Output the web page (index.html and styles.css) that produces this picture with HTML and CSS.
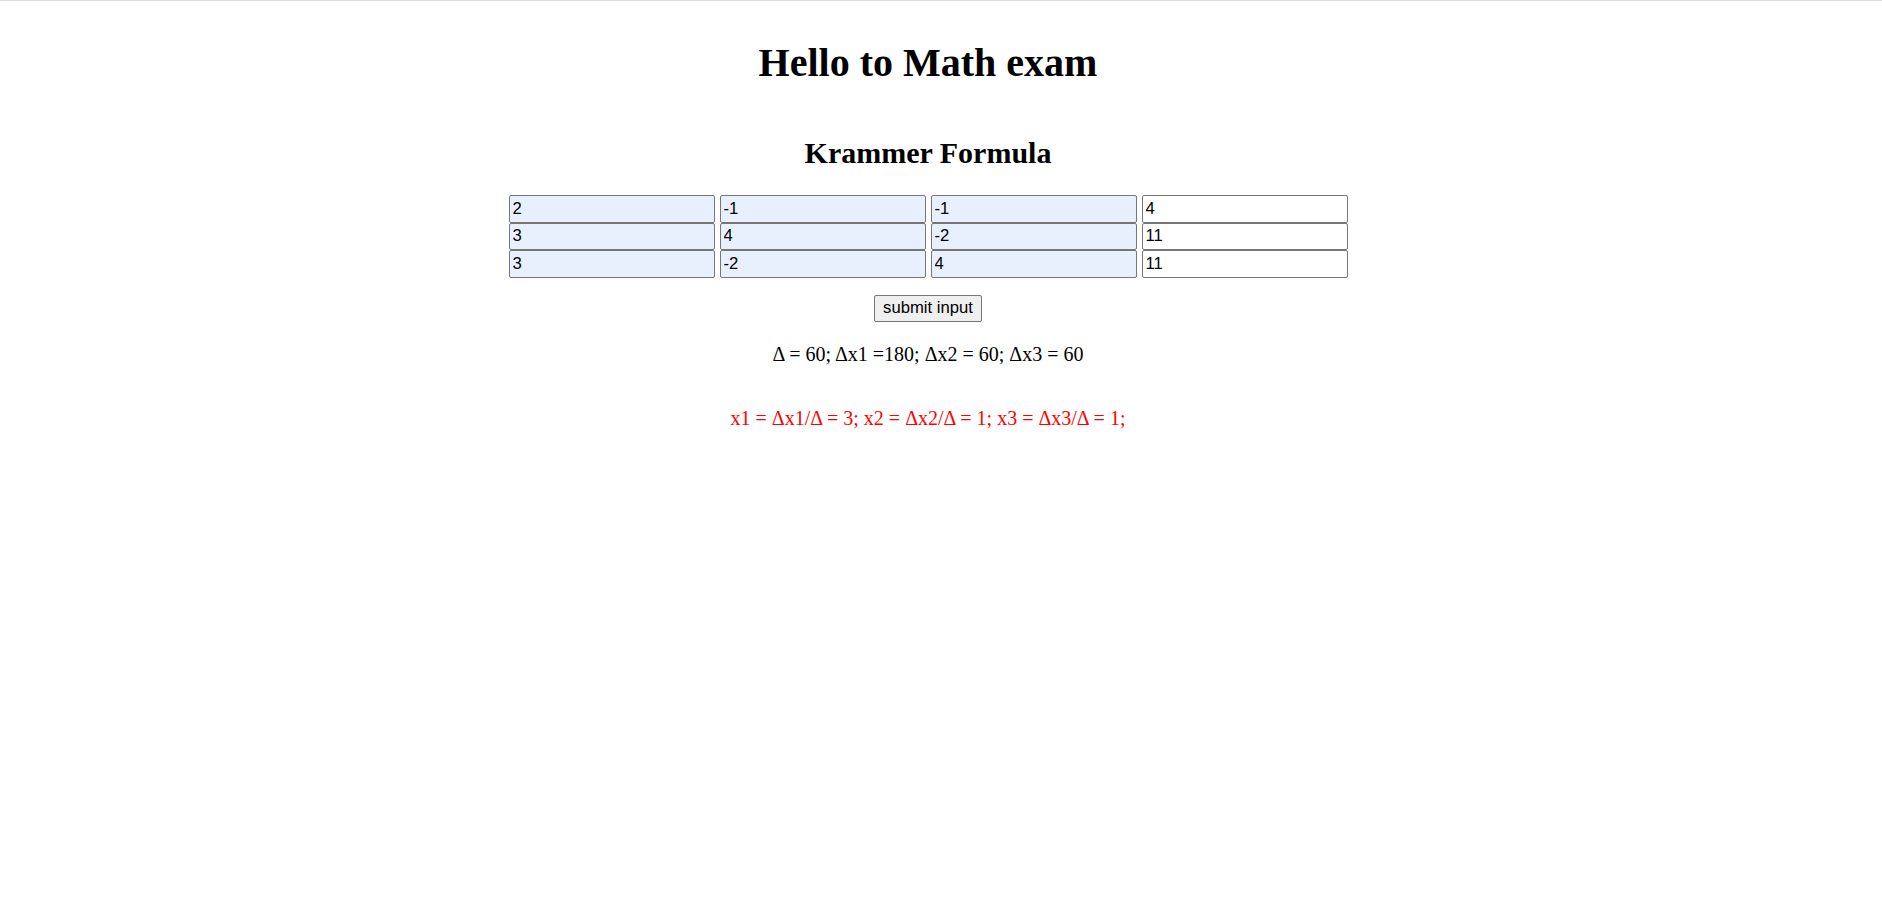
FILE: index.html
```html
<!DOCTYPE html>
<html lang="en">
<head>
<meta charset="utf-8">
<title>Math exam</title>
<link rel="stylesheet" href="styles.css">
</head>
<body>
  <h1 class="title">Hello to Math exam</h1>
  <div class="exam">
    <h2 class="subtitle">Krammer Formula</h2>
    <form class="matrix">
      <div class="row">
        <input class="cell filled" type="text" value="2">
        <input class="cell filled" type="text" value="-1">
        <input class="cell filled" type="text" value="-1">
        <input class="cell" type="text" value="4">
      </div>
      <div class="row">
        <input class="cell filled" type="text" value="3">
        <input class="cell filled" type="text" value="4">
        <input class="cell filled" type="text" value="-2">
        <input class="cell" type="text" value="11">
      </div>
      <div class="row">
        <input class="cell filled" type="text" value="3">
        <input class="cell filled" type="text" value="-2">
        <input class="cell filled" type="text" value="4">
        <input class="cell" type="text" value="11">
      </div>
      <div class="actions">
        <button class="submit" type="button">submit input</button>
      </div>
    </form>
    <p class="delta">Δ = 60; Δx1 =180; Δx2 = 60; Δx3 = 60</p>
    <p class="answer">x1 = Δx1/Δ = 3; x2 = Δx2/Δ = 1; x3 = Δx3/Δ = 1;</p>
  </div>
</body>
</html>
```
FILE: styles.css
```css
html {
  border-top: 1px solid #dcdcdc;
  background: #ffffff;
}

body {
  margin: 0;
  padding: 10px 36px 10px 10px;
  font-family: "Liberation Serif", "Times New Roman", serif;
  font-size: 20px;
  color: #000000;
  text-align: center;
}

.title {
  font-size: 40px;
  font-weight: bold;
  margin: 28px 0 25.6px;
}

.exam {
  display: flow-root;
}

.subtitle {
  font-size: 30px;
  font-weight: bold;
  margin: 24.9px 0;
}

.matrix {
  display: flex;
  flex-direction: column;
  align-items: center;
  margin: 0;
}

.row {
  display: flex;
  gap: 5px;
}

.cell {
  box-sizing: border-box;
  width: 206px;
  height: 27.4px;
  margin: 0;
  padding: 0 3px;
  border: 1px solid #767676;
  border-radius: 2px;
  background: #ffffff;
  font-family: "Liberation Sans", Arial, sans-serif;
  font-size: 16.67px;
  color: #000000;
  text-align: left;
}

.cell.filled {
  background: #e8f0fe;
}

.actions {
  margin-top: 17.3px;
}

.submit {
  box-sizing: border-box;
  width: 108px;
  height: 27px;
  padding: 0;
  border: 1px solid #767676;
  border-radius: 2px;
  background: #efefef;
  font-family: "Liberation Sans", Arial, sans-serif;
  font-size: 16.67px;
  color: #000000;
}

.delta {
  margin: 21.3px 0 0;
}

.answer {
  margin: 41px 0 0;
  color: #ff0000;
}
```
